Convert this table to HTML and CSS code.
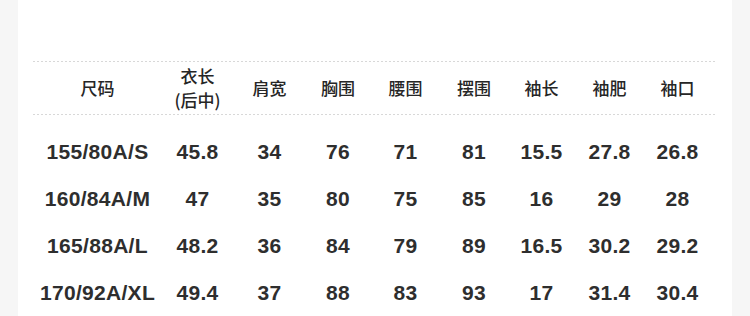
FILE: index.html
```html
<!DOCTYPE html>
<html lang="zh">
<head>
<meta charset="utf-8">
<link rel="stylesheet" href="styles.css">
</head>
<body>
<div class="panel">
  <div class="table">
    <div class="rule"></div>
    <div class="row head">
      <div class="cell">尺码</div>
      <div class="cell">衣长<br>(后中)</div>
      <div class="cell">肩宽</div>
      <div class="cell">胸围</div>
      <div class="cell">腰围</div>
      <div class="cell">摆围</div>
      <div class="cell">袖长</div>
      <div class="cell">袖肥</div>
      <div class="cell">袖口</div>
    </div>
    <div class="rule"></div>
    <div class="body">
      <div class="row data">
        <div class="cell">155/80A/S</div><div class="cell">45.8</div><div class="cell">34</div><div class="cell">76</div><div class="cell">71</div><div class="cell">81</div><div class="cell">15.5</div><div class="cell">27.8</div><div class="cell">26.8</div>
      </div>
      <div class="row data">
        <div class="cell">160/84A/M</div><div class="cell">47</div><div class="cell">35</div><div class="cell">80</div><div class="cell">75</div><div class="cell">85</div><div class="cell">16</div><div class="cell">29</div><div class="cell">28</div>
      </div>
      <div class="row data">
        <div class="cell">165/88A/L</div><div class="cell">48.2</div><div class="cell">36</div><div class="cell">84</div><div class="cell">79</div><div class="cell">89</div><div class="cell">16.5</div><div class="cell">30.2</div><div class="cell">29.2</div>
      </div>
      <div class="row data">
        <div class="cell">170/92A/XL</div><div class="cell">49.4</div><div class="cell">37</div><div class="cell">88</div><div class="cell">83</div><div class="cell">93</div><div class="cell">17</div><div class="cell">31.4</div><div class="cell">30.4</div>
      </div>
    </div>
  </div>
</div>
</body>
</html>
```
FILE: styles.css
```css
html, body {
  margin: 0;
  padding: 0;
  background: #f6f6f6;
}
.panel {
  margin-left: 18px;
  width: 714px;
  height: 316px;
  background: #ffffff;
  padding: 61px 0 0 15px;
  box-sizing: border-box;
  overflow: hidden;
}
.table {
  width: 683px;
}
.rule {
  height: 1px;
  background: repeating-linear-gradient(to right, #d8d8d8 0 2px, transparent 2px 4px);
}
.row {
  display: grid;
  grid-template-columns: 129px 71px 73px 64px 71px 66px 69px 67px 69px;
  align-items: center;
}
.cell {
  text-align: center;
  color: #333333;
  white-space: nowrap;
}
.head {
  height: 52px;
  font-family: "Noto Sans CJK SC", "Noto Sans", sans-serif;
  font-size: 17px;
  font-weight: 500;
  line-height: 24px;
}
.head .cell {
  color: #262626;
}
.body {
  padding-top: 13px;
}
.data {
  height: 47px;
  font-family: "Liberation Sans", Arial, sans-serif;
  font-weight: bold;
  font-size: 21px;
  line-height: 24px;
  letter-spacing: 0.3px;
}
.data .cell {
  color: #2e2e2e;
}
```
